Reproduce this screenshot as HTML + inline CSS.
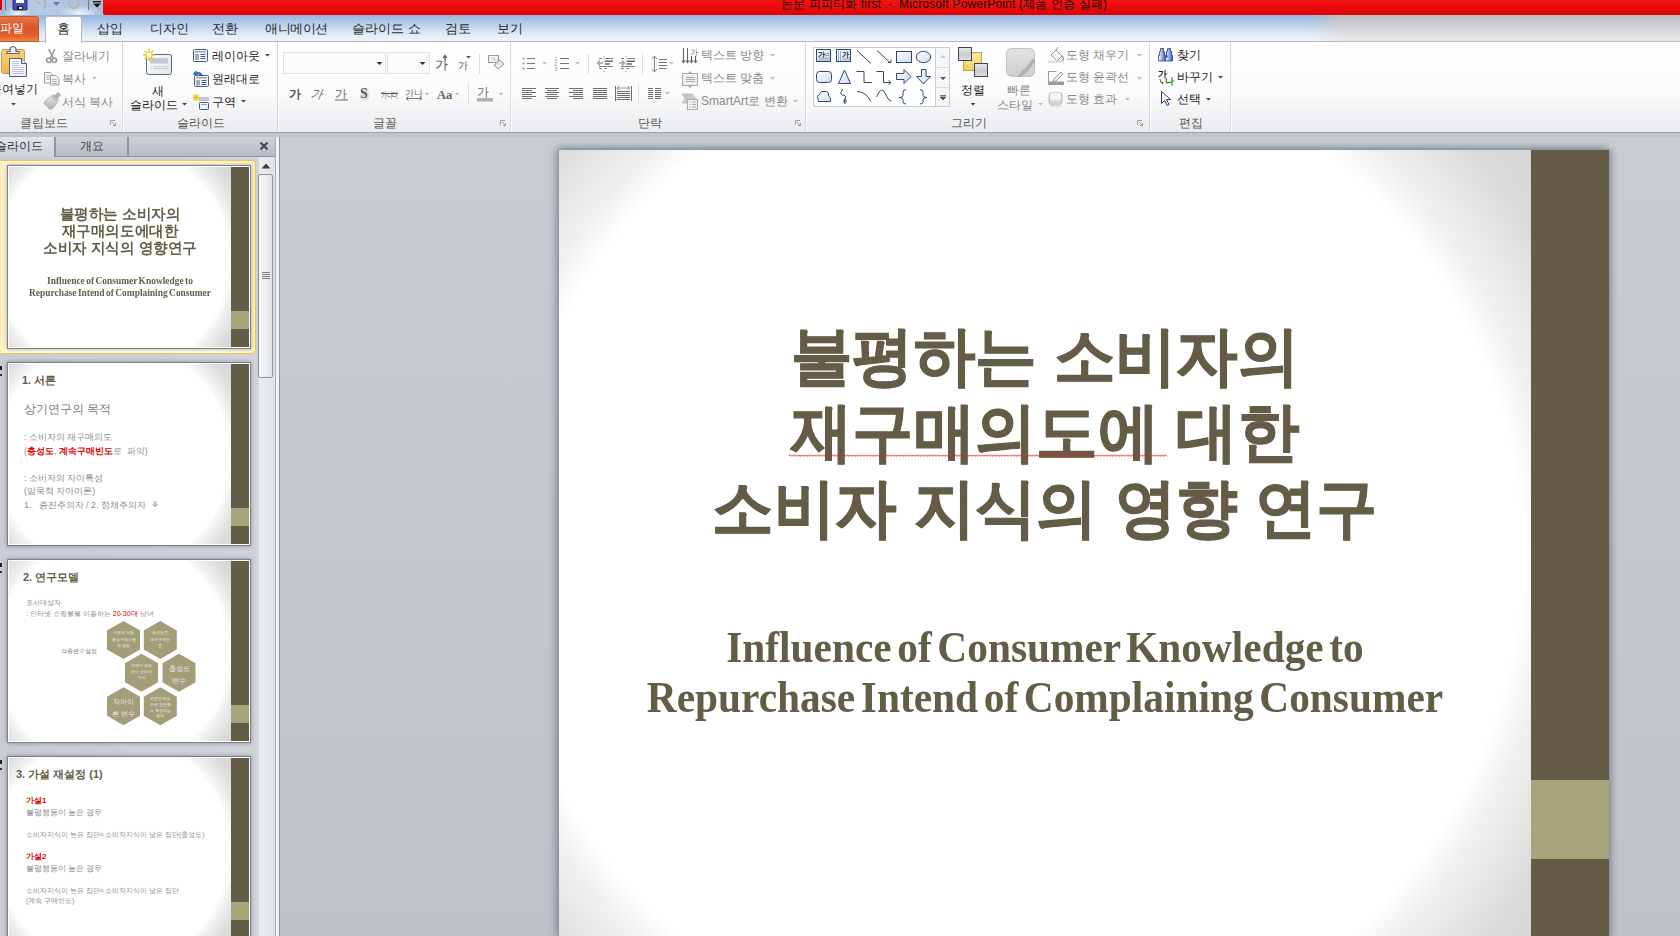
<!DOCTYPE html>
<html><head><meta charset="utf-8">
<style>
*{margin:0;padding:0;box-sizing:border-box}
html,body{width:1680px;height:936px;overflow:hidden;background:#c9ccd1;font-family:"Liberation Sans",sans-serif;}
.a{position:absolute}
.t{position:absolute;white-space:nowrap;font-size:12px;line-height:14px;color:#333}
.g{color:#8a8a8a}
#titlebar{left:0;top:0;width:1680px;height:16px;background:radial-gradient(ellipse 14px 8px at 18px 14px,rgba(255,255,240,.85),rgba(255,255,255,0)),radial-gradient(ellipse 22px 8px at 80px 13px,rgba(255,255,255,.8),rgba(255,255,255,0)),linear-gradient(90deg,#9fb8d6 0,#b8cde3 40px,#a6bdd8 100px,#b6c8dc 1300px,#c6c8ce 1340px,#d0d0d4 1680px)}
#redbar{left:103px;top:0;width:1577px;height:15px;background:linear-gradient(#f21414,#dc0404);border-bottom-left-radius:2px}
#tabrow{left:0;top:15px;width:1680px;height:27px;background:linear-gradient(#95b4de,#c5d7ee 45%,#e4edf7 75%,#eef3f9)}
#tabgrey{left:1310px;top:15px;width:370px;height:27px;background:linear-gradient(#bdbcc0,#d2d1d4 45%,#ececee);-webkit-mask-image:linear-gradient(90deg,transparent 0,#000 30px)}
#ribbon{left:0;top:41px;width:1680px;height:92px;background:linear-gradient(#ffffff 0,#fbfbfc 55%,#e9ebee 100%);border-top:1px solid #b6bac0;border-bottom:1px solid #9da3aa}
.sep{position:absolute;top:42px;width:2px;height:90px;border-left:1px solid #d4d8dd;border-right:1px solid #fff}
.glabel{position:absolute;top:116px;font-size:12px;line-height:14px;color:#555;white-space:nowrap}
#gap{left:0;top:133px;width:1680px;height:4px;background:#c1c5cb}
#panel{left:0;top:137px;width:275px;height:799px;background:linear-gradient(90deg,#c9cdd3,#d0d4da)}
#ptabs{left:0;top:137px;width:275px;height:20px;background:linear-gradient(#cfd3d9,#b9bdc3);border-top:1px solid #8e959d;border-bottom:1px solid #8e959d}
#splitter{left:275px;top:137px;width:5px;height:799px;background:#f2f3f5;border-left:1px solid #a9aeb5;border-right:1px solid #8f959c}
#main{left:280px;top:137px;width:1400px;height:799px;background:linear-gradient(#c9ccd1,#bfc2c7)}
.thumb{position:absolute;left:7px;width:244px;height:184px;border:1px solid #7b828a;background:#fff;box-shadow:0 0 4px rgba(0,0,0,.35)}
.thumb .sl{position:absolute;left:1px;top:1px;width:240px;height:180px;background:radial-gradient(circle farthest-corner at 43.3% 51.2%,#fff 0,#fff 70.5%,#f0f0f0 75%,#dadada 85%,#d0d0d0 100%);overflow:hidden}
.thumb .bar{position:absolute;left:222px;top:0;width:18px;height:180px;background:#655c47}
.thumb .band{position:absolute;left:222px;top:144px;width:18px;height:18px;background:#a8a57c}
#slide{left:559px;top:150px;width:1050px;height:788px;outline:1px solid rgba(140,152,166,.7);background:radial-gradient(circle farthest-corner at 43.3% 51.2%,#ffffff 0,#ffffff 70.5%,#f0f0f0 75%,#dadada 85%,#d0d0d0 100%);box-shadow:-3px -2px 8px rgba(60,70,80,.45), 3px 0 6px rgba(60,70,80,.35)}
#sbar{left:1531px;top:150px;width:78px;height:788px;background:#655c47}
#sband{left:1531px;top:780px;width:78px;height:79px;background:#a8a57c}
.title{position:absolute;left:559px;width:972px;text-align:center;color:#655c47;font-weight:bold;font-size:64px;white-space:nowrap;transform:scaleX(.96);-webkit-text-stroke:1px #655c47}
.sub{position:absolute;left:559px;width:972px;text-align:center;color:#655c47;font-weight:bold;font-family:"Liberation Serif",serif;font-size:44px;white-space:nowrap;transform:scaleX(.94)}
</style></head><body>
<div id="titlebar" class="a"></div>
<div id="redbar" class="a"></div>
<div id="tabrow" class="a"></div>
<div id="tabgrey" class="a"></div>
<div id="ribbon" class="a"></div>
<div id="gap" class="a"></div>
<div id="panel" class="a"></div>
<div id="ptabs" class="a"></div>
<div id="splitter" class="a"></div>
<div id="main" class="a"></div>


<!-- QAT -->
<div class="a" style="left:0;top:0;width:2px;height:10px;background:#d00"></div>
<div class="a" style="left:5px;top:0;width:1px;height:10px;background:#6a7a8a"></div>
<svg class="a" style="left:12px;top:0" width="16" height="11" viewBox="0 0 16 11"><rect x="1" y="-4" width="14" height="14" rx="1" fill="#4a48b8" stroke="#2a2a80" stroke-width="1"/><rect x="4" y="-4" width="8" height="7" fill="#fff"/><rect x="5" y="6" width="6" height="4" fill="#222"/><rect x="7" y="7" width="3" height="2" fill="#ddd"/></svg>
<svg class="a" style="left:35px;top:0" width="14" height="10" viewBox="0 0 14 10"><path d="M9 0 Q12 4 9 9" stroke="#b0b4ba" stroke-width="2.2" fill="none"/><path d="M1 0 L7 3 L3 4 Z" fill="#b0b4ba"/></svg>
<svg class="a" style="left:53px;top:2px" width="7" height="4"><path d="M0 0H7L3.5 4Z" fill="#6b7f99"/></svg>
<svg class="a" style="left:67px;top:0" width="14" height="10" viewBox="0 0 14 10"><path d="M4 -1 A5 5 0 1 0 10 -1" stroke="#b4b6ba" stroke-width="2.4" fill="none"/></svg>
<div class="a" style="left:88px;top:0;width:1px;height:10px;background:#6a7a8a"></div>
<svg class="a" style="left:93px;top:0" width="9" height="8"><rect x="0" y="1" width="8" height="1.3" fill="#111"/><path d="M0 3.5H8L4 7.5Z" fill="#111"/></svg>
<div class="t" style="left:781px;top:-3px;font-size:12px;color:#1a0a0a;white-space:pre;letter-spacing:0.15px">논문 피피티화 first  -  Microsoft PowerPoint (제품 인증 실패)</div>

<!-- tabs -->
<div class="a" style="left:-4px;top:16px;width:43px;height:26px;border-radius:3px 3px 0 0;background:linear-gradient(#e8734a,#d9552a 45%,#e0602d 80%,#f08a3c);border:1px solid #c4532a"></div>
<div class="t" style="left:0;top:21px;color:#fff;font-size:12px">파일</div>
<div class="a" style="left:45px;top:16px;width:37px;height:27px;border-radius:3px 3px 0 0;background:linear-gradient(#fafcff,#fff);border:1px solid #b6bac0;border-bottom:none"></div>
<div class="t" style="left:57px;top:22px;color:#2a2a2a;font-size:13px">홈</div>
<div class="t" style="left:97px;top:22px;color:#2a2a2a;font-size:13px">삽입</div>
<div class="t" style="left:150px;top:22px;color:#2a2a2a;font-size:13px">디자인</div>
<div class="t" style="left:212px;top:22px;color:#2a2a2a;font-size:13px">전환</div>
<div class="t" style="left:265px;top:22px;color:#2a2a2a;font-size:13px;letter-spacing:-0.5px">애니메이션</div>
<div class="t" style="left:352px;top:22px;color:#2a2a2a;font-size:13px">슬라이드 쇼</div>
<div class="t" style="left:445px;top:22px;color:#2a2a2a;font-size:13px">검토</div>
<div class="t" style="left:497px;top:22px;color:#2a2a2a;font-size:13px">보기</div>


<svg class="a" style="left:0;top:0" width="1680" height="135" viewBox="0 0 1680 135" font-family="Liberation Sans, sans-serif">
<defs>
<linearGradient id="gclip" x1="0" y1="0" x2="0" y2="1"><stop offset="0" stop-color="#f7d07a"/><stop offset="1" stop-color="#eeb84e"/></linearGradient>
<linearGradient id="gpaper" x1="0" y1="0" x2="1" y2="1"><stop offset="0" stop-color="#ffffff"/><stop offset="1" stop-color="#e6ecf5"/></linearGradient>
<linearGradient id="gslide" x1="0" y1="0" x2="1" y2="1"><stop offset="0" stop-color="#fdfdfe"/><stop offset="1" stop-color="#dfe5ee"/></linearGradient>
<radialGradient id="gstar"><stop offset="0" stop-color="#fffbe0"/><stop offset="0.5" stop-color="#f7d54a"/><stop offset="1" stop-color="#e8b820" stop-opacity="0.9"/></radialGradient>
<linearGradient id="ggrey" x1="0" y1="0" x2="0" y2="1"><stop offset="0" stop-color="#e8e8ea"/><stop offset="1" stop-color="#a9abae"/></linearGradient>
</defs>
<!-- paste -->
<rect x="1.5" y="49.5" width="23" height="24" rx="2" fill="url(#gclip)" stroke="#c49a52"/>
<path d="M7 53.5 h12 v-2 h-3 v-2 a3 3 0 0 0 -6 0 v2 h-3z" fill="#eef2f6" stroke="#5d6b7a" stroke-width="1.2"/>
<path d="M9.5 58.5 h12 l5 5 v13 h-17z" fill="url(#gpaper)" stroke="#4f627a"/>
<path d="M21.5 58.5 v5 h5" fill="#dfe6ef" stroke="#4f627a"/>
<g stroke="#b7c0cc" stroke-width="0.9"><path d="M12 61.5h7M12 63.5h7M12 65.5h7M12 67.5h12M12 69.5h12M12 71.5h12M12 73.5h12"/></g>
<path d="M11 103 h5 l-2.5 2.5z" fill="#444"/>
<!-- cut -->
<g stroke="#9a9a9a" fill="none" stroke-width="1.6"><path d="M48.5 49 L53.5 58.5 M55 49 L50 58.5"/><circle cx="48.8" cy="60.3" r="2.2"/><circle cx="54.3" cy="60.3" r="2.2"/></g>
<!-- copy -->
<path d="M44.5 72.5h6l3 3v7.5h-9z" fill="#f6f6f6" stroke="#a0a0a0"/>
<path d="M50.5 75.5h5.5l3 3v6.5h-8.5z" fill="#f6f6f6" stroke="#a0a0a0"/>
<path d="M46 75.5h4M46 77.5h5M46 79.5h4M52 79.5h5M52 81.5h5M52 83.5h5" stroke="#b8b8b8" stroke-width="1"/>
<path d="M92 77 h5 l-2.5 2.5z" fill="#b8bcc2"/>
<!-- format painter -->
<path d="M44 103.5q1-3 4-5l3-2l6 6l-2 3q-2 3-5 4z" fill="url(#ggrey)" stroke="#a6a6a6" stroke-width="0.8"/>
<path d="M51.5 96l5.5 5.5l1.5-1.5l-5.5-5.5z" fill="#c8c8c8" stroke="#9a9a9a" stroke-width="0.7"/>
<path d="M54.5 96l3.5-3.5l2.5 2.5l-3.5 3.5z" fill="#b5b5b5" stroke="#959595" stroke-width="0.7"/>
<!-- new slide -->
<rect x="146.5" y="54.5" width="25" height="20" rx="2" fill="url(#gslide)" stroke="#5a6a80"/>
<rect x="150" y="58" width="18" height="5.5" fill="#c3cad6"/>
<path d="M150 66.5h2M153 66.5h15M150 68.5h2M153 68.5h15" stroke="#c3cad6" stroke-width="0.9"/>
<g stroke="#f2c319" stroke-width="1.6"><path d="M149 49v12M143 55h12M144.8 50.8l8.4 8.4M153.2 50.8l-8.4 8.4"/></g>
<circle cx="149" cy="55" r="2.4" fill="#fffde8"/>
<path d="M182 103 h5 l-2.5 2.5z" fill="#444"/>
<!-- layout -->
<rect x="193.5" y="49.5" width="14" height="12" rx="1" fill="#f4f7fb" stroke="#4d5f78"/>
<rect x="195" y="51" width="11" height="1.5" fill="#9aa6b6"/>
<rect x="195" y="54" width="4" height="6" fill="#a5adb8"/>
<path d="M200.5 54.5h5M200.5 56.5h5M200.5 58.5h5" stroke="#3d5a9a" stroke-width="1"/>
<path d="M265 54 h5 l-2.5 2.5z" fill="#444"/>
<!-- reset -->
<rect x="194.5" y="75.5" width="14" height="11" rx="1" fill="#f4f7fb" stroke="#4d5f78"/>
<rect x="196" y="77" width="11" height="1.5" fill="#9aa6b6"/>
<rect x="196" y="80" width="4" height="5.5" fill="#a5adb8"/>
<path d="M201.5 80.5h5M201.5 82.5h5M201.5 84.5h5" stroke="#3d5a9a" stroke-width="1"/>
<path d="M193 74 L196 71 L196.5 72.5 Q201 71.5 203 76 L200.5 75 Q198 73.5 196.5 74.5 L197 76 Z" fill="#3a6fd8" stroke="#2452b0" stroke-width="0.6"/>
<!-- section -->
<g stroke="#f2c319" stroke-width="1.2"><path d="M196 94v7M192.5 97.5h7M193.5 95l5 5M198.5 95l-5 5"/></g>
<rect x="199.5" y="97.5" width="9" height="3" fill="#c8ccd2" stroke="#aab0b8" stroke-width="0.6"/>
<rect x="199.5" y="102.5" width="9" height="7" rx="0.8" fill="url(#gslide)" stroke="#4d5f78"/>
<rect x="201" y="104" width="6" height="1" fill="#9aa6b6"/>
<path d="M241 100 h5 l-2.5 2.5z" fill="#444"/>
<!-- launchers -->
<g fill="none" stroke="#8c9096" stroke-width="0.8"><path d="M110.5 125 v-4.5 h4.5"/><path d="M112 122 l3.5 3.5 M115.5 123 v2.5 h-2.5"/></g>
<g fill="none" stroke="#8c9096" stroke-width="0.8"><path d="M500.5 125 v-4.5 h4.5"/><path d="M502 122 l3.5 3.5 M505.5 123 v2.5 h-2.5"/></g>
<g fill="none" stroke="#8c9096" stroke-width="0.8"><path d="M795.5 125 v-4.5 h4.5"/><path d="M797 122 l3.5 3.5 M800.5 123 v2.5 h-2.5"/></g>
<g fill="none" stroke="#8c9096" stroke-width="0.8"><path d="M1137.5 125 v-4.5 h4.5"/><path d="M1139 122 l3.5 3.5 M1142.5 123 v2.5 h-2.5"/></g>
<!-- font boxes -->
<rect x="283.5" y="52.5" width="102" height="21" fill="#fafbfc" stroke="#dde2e8"/>
<rect x="387.5" y="52.5" width="42" height="21" fill="#fafbfc" stroke="#dde2e8"/>
<path d="M376.5 62 h6 l-3 3z" fill="#333"/>
<path d="M419.5 62 h6 l-3 3z" fill="#333"/>
<text x="435" y="69" font-size="13" fill="#555">가</text>
<path d="M445 60 v-4 M443 58 l2 -2.5 l2 2.5" stroke="#555" fill="none" stroke-width="1.2"/>
<text x="458" y="69" font-size="10" fill="#555">가</text>
<path d="M466 56 h5 l-2.5 2.5z" fill="#555"/>
<path d="M479.5 54v20" stroke="#dcdfe3"/>
<rect x="488.5" y="55.5" width="10" height="7" fill="#f0f0f0" stroke="#9a9a9a"/>
<text x="490" y="61.5" font-size="6" fill="#777">ㄱㄴ</text>
<path d="M494 65 l6 -5 l4 4 l-6 5z" fill="#e8e8e8" stroke="#9a9a9a"/>
<!-- font row2 -->
<text x="289" y="98" font-size="12" font-weight="bold" fill="#555">가</text>
<text x="310" y="98" font-size="12" font-style="italic" fill="#666" transform="skewX(-10) translate(17 0)">가</text>
<text x="335" y="98" font-size="12" fill="#666">가</text>
<path d="M335 100h13" stroke="#666"/>
<text x="360" y="98" font-size="14" font-weight="bold" fill="#606060" font-family="Liberation Serif, serif" style="filter:drop-shadow(1px 1.5px 1px #999)">S</text>
<text x="381" y="97.5" font-size="9" fill="#555" textLength="17" lengthAdjust="spacingAndGlyphs">가나다</text>
<path d="M381 93.5h17" stroke="#555"/>
<text x="405" y="96" font-size="9" fill="#666">가나</text>
<path d="M406 98.5h16 M406 98.5l2.5-2 M406 98.5l2.5 2 M422 98.5l-2.5-2 M422 98.5l-2.5 2" stroke="#777" fill="none"/>
<path d="M425 93 h4 l-2 2z" fill="#aaa"/>
<text x="437" y="98.5" font-size="12.5" font-weight="bold" fill="#666" font-family="Liberation Serif, serif">Aa</text>
<path d="M455 93 h4 l-2 2z" fill="#aaa"/>
<path d="M468.5 84v20" stroke="#dcdfe3"/>
<text x="477" y="96" font-size="12" fill="#666">가</text>
<rect x="477" y="98" width="16" height="3.5" fill="#b0b0b0"/>
<path d="M499 93 h4 l-2 2z" fill="#aaa"/>
</svg>


<svg class="a" style="left:0;top:0" width="1680" height="135" viewBox="0 0 1680 135" font-family="Liberation Sans, sans-serif">
<defs>
<linearGradient id="gshape" x1="0" y1="0" x2="1" y2="1"><stop offset="0" stop-color="#ffffff"/><stop offset="1" stop-color="#cfdcea"/></linearGradient>
<linearGradient id="gqs" x1="0" y1="0" x2="0" y2="1"><stop offset="0" stop-color="#e4e2e4"/><stop offset="1" stop-color="#cfcdd0"/></linearGradient>
<linearGradient id="garr" x1="0" y1="0" x2="0" y2="1"><stop offset="0" stop-color="#e9eaec"/><stop offset="0.5" stop-color="#c9cbcf"/><stop offset="1" stop-color="#e0e1e3"/></linearGradient>
<linearGradient id="gyel" x1="0" y1="0" x2="0" y2="1"><stop offset="0" stop-color="#fbe9a0"/><stop offset="1" stop-color="#ecd060"/></linearGradient>
</defs>
<g stroke="#777" stroke-width="1">
<!-- bullets -->
<path d="M527 58.5h8M527 63.5h8M527 68.5h8"/>
<path d="M560 58.5h9M560 63.5h9M560 68.5h9"/>
</g>
<g fill="#999"><circle cx="523.5" cy="58.5" r="1.1"/><circle cx="523.5" cy="63.5" r="1.1"/><circle cx="523.5" cy="68.5" r="1.1"/></g>
<text x="554.5" y="60.5" font-size="5" fill="#888">1</text><text x="554.5" y="65.5" font-size="5" fill="#888">2</text><text x="554.5" y="70.5" font-size="5" fill="#888">3</text>
<path d="M542 62 h5 l-2.5 2.5z M575 62 h5 l-2.5 2.5z M669 62 h5 l-2.5 2.5z M665 92 h5 l-2.5 2.5z M770 54 h5 l-2.5 2.5z M770 77 h5 l-2.5 2.5z M793 100 h5 l-2.5 2.5z" fill="#bbb"/>
<path d="M588.5 54v20M642.5 54v20M638.5 84v20" stroke="#dcdfe3"/>
<!-- indents -->
<g stroke="#808080" stroke-width="1">
<path d="M599 58.5h3M605 58.5h8M599 66.5h14M599 68.5h3M605 68.5h2"/>
<path d="M621 58.5h3M627 58.5h8M621 66.5h14M621 68.5h3M627 68.5h2"/>
</g>
<g stroke="#6a6a6a" stroke-width="1.6">
<path d="M605 61.3h8M605 64h5M627 61.3h8M627 64h5"/>
</g>
<path d="M604 56v16M626 56v16" stroke="#777" stroke-width="0.8" stroke-dasharray="1 1.5"/>
<path d="M603 63h-5.5M600 60.5l-2.5 2.5l2.5 2.5" stroke="#a0a0a0" fill="none" stroke-width="1.3"/>
<path d="M619 63h5.5M622 60.5l2.5 2.5l-2.5 2.5" stroke="#a0a0a0" fill="none" stroke-width="1.3"/>
<!-- line spacing -->
<path d="M654.5 56v16 M652 59l2.5-3l2.5 3 M652 69l2.5 3l2.5-3" stroke="#888" fill="none"/>
<path d="M659 59.5h8M659 62.5h8M659 65.5h8M659 68.5h8" stroke="#777"/>
<!-- align row -->
<g stroke="#6e6e6e" stroke-width="1">
<path d="M522 88.5h14M522 90.5h10M522 92.5h14M522 94.5h10M522 96.5h14M522 98.5h10"/>
<path d="M545 88.5h14M547 90.5h10M545 92.5h14M547 94.5h10M545 96.5h14M547 98.5h10"/>
<path d="M569 88.5h14M573 90.5h10M569 92.5h14M573 94.5h10M569 96.5h14M573 98.5h10"/>
<path d="M593 88.5h14M593 90.5h14M593 92.5h14M593 94.5h14M593 96.5h14M593 98.5h14"/>
<path d="M617 91.5h13M617 93.5h13M617 95.5h13M617 97.5h13M617 99.5h13M615.5 86v15M631.5 86v15"/>
<path d="M648 88.5h5M655 88.5h6M648 90.5h5M655 90.5h6M648 92.5h5M655 92.5h6M648 94.5h5M655 94.5h6M648 96.5h5M655 96.5h6M648 98.5h5M655 98.5h6"/>
</g>
<path d="M617 88h13 M619.5 86l-2.5 2l2.5 2 M627.5 86l2.5 2l-2.5 2" stroke="#999" fill="none"/>
<!-- text direction -->
<g stroke="#666" stroke-width="1.1" fill="none"><path d="M683.5 48v14M687.5 48v14M691.5 56v6M695.5 56v6M682 60.5l1.5 2l1.5-2M686 60.5l1.5 2l1.5-2M690 60.5l1.5 2l1.5-2M694 60.5l1.5 2l1.5-2"/></g>
<text x="689.5" y="55" font-size="7.5" fill="#666">가</text>
<!-- align text -->
<rect x="682.5" y="73.5" width="15" height="12" fill="#eeeef0" stroke="#aaa"/>
<path d="M686 77.5h9M686 79.5h9M686 81.5h9" stroke="#999" stroke-width="0.8"/>
<path d="M690 71l-2 2.5h4z M690 88l-2-2.5h4z" fill="#999"/>
<!-- smartart -->
<path d="M682 94h10l4 4.5l-4 4.5h-10l3-4.5z" fill="#c8c8c8" stroke="#b0b0b0" stroke-width="0.6"/>
<rect x="687.5" y="99.5" width="10" height="10" fill="#f2f2f2" stroke="#aaa"/>
<path d="M689.5 102h1M692 102h4M689.5 104.5h1M692 104.5h4M689.5 107h1M692 107h4" stroke="#999" stroke-width="0.8"/>
<!-- gallery -->
<rect x="813.5" y="47.5" width="136" height="59" fill="#fff" stroke="#c5cbd3"/>
<rect x="935.5" y="47.5" width="14" height="59" fill="#f5f6f8" stroke="#c5cbd3"/>
<path d="M935.5 67.5h14M935.5 87.5h14" stroke="#d5dae0"/>
<path d="M940 58h6l-3-3z" fill="#c8ccd0"/>
<path d="M940 77h6l-3 3z" fill="#555"/>
<path d="M940 95.5h6M940 97h6l-3 3z" stroke="#555" fill="#555" stroke-width="0.8"/>
<g stroke="#2e4a74" stroke-width="1" fill="url(#gshape)">
<rect x="896.5" y="51.5" width="15" height="11"/>
<ellipse cx="923.5" cy="57" rx="7.2" ry="5.7"/>
<rect x="816.5" y="71.5" width="15" height="11" rx="3"/>
<path d="M838.5 83.5l6-13.5l6 13.5z"/>
<path d="M896.5 73.5h7.5v-4l7 7l-7 7v-4h-7.5z"/>
<path d="M921.5 69.5h4.5v7h4.5l-7 7.5l-7-7.5h5z"/>
<path d="M818.5 101.5l-1-5l4-5h5q3 1 2 4.5q3 1 2 5.5z"/>
</g>
<g stroke="#2e4a74" stroke-width="1" fill="none">
<path d="M857 50.5l14 13M877 50.5l13 12M888 62.5h3v-3"/>
<path d="M856.5 71.5h7.5v11h8M876.5 71.5h7v11h7M888.5 80.5l2.5 2l-2.5 2"/>
<path d="M842 89v2q-2 1-1 3t3 1q3 1 1 4q-2 2 0 3q2 1 1 -2q-1 -2 -2 1l1 3"/>
<path d="M857 91.5q9 0 14 10"/>
<path d="M876.5 97q3-7 5-7q3 0 5 6q2 5 5 5"/>
<path d="M906 89.5q-3 0-3 3v3q0 2-4 2q4 0 4 2v2.5q0 2 3 2M920 89.5q3 0 3 3v3q0 2 4 2q-4 0-4 2v2.5q0 2-3 2"/>
</g>
<rect x="816.5" y="49.5" width="14" height="12" fill="url(#gshape)" stroke="#2e4a74"/>
<text x="818" y="56.5" font-size="7" font-weight="bold" fill="#111">가</text><path d="M824.5 53.5h5M824.5 55.5h5M818 58h11.5M818 60h11.5" stroke="#6a7fa6" stroke-width="0.7"/>
<rect x="836.5" y="49.5" width="14" height="12" fill="url(#gshape)" stroke="#2e4a74"/>
<text x="842" y="56.5" font-size="7" font-weight="bold" fill="#111">가</text><path d="M838.5 51v10M840.5 51v10M843 57.5v3M845 57.5v3M847 57.5v3M849 57.5v3" stroke="#6a7fa6" stroke-width="0.6"/>
<!-- arrange -->
<rect x="963.5" y="52.5" width="18" height="18" fill="url(#gyel)" stroke="#c9a830"/>
<rect x="958.5" y="47.5" width="13" height="13" fill="url(#garr)" stroke="#3b4654"/>
<rect x="974.5" y="63.5" width="13" height="13" fill="url(#garr)" stroke="#3b4654"/>
<path d="M970.5 103h5l-2.5 2.5z" fill="#444"/>
<!-- quick styles -->
<rect x="1006.5" y="48.5" width="28" height="28" rx="5" fill="url(#gqs)" stroke="#c2c0c3"/>
<path d="M1018 77 q4-7 9-10 l6-8 l2 2 l-6 8 q-3 5-11 8z" fill="#b5b3b5" stroke="#9e9c9f" stroke-width="0.6"/>
<path d="M1038 103h5l-2.5 2.5z" fill="#bbb"/>
<!-- shape fill -->
<path d="M1051 55l5-5l6 6l-5 5z" fill="#f5f5f5" stroke="#9a9a9a"/>
<path d="M1056 50l2-3" stroke="#9a9a9a"/>
<path d="M1062 56q2 2 1 5" stroke="#a0a0a0" stroke-width="1.5" fill="none"/>
<rect x="1048" y="60.5" width="16" height="2.5" fill="#e8dde2"/>
<path d="M1137 54h5l-2.5 2.5z M1137 77h5l-2.5 2.5z M1125 98h5l-2.5 2.5z" fill="#bbb"/>
<!-- outline -->
<path d="M1048.5 82v-10.5h8" stroke="#9a9a9a" fill="none"/>
<path d="M1054 79l7-7l2 2l-7 7l-3 1z" fill="#f4f4f4" stroke="#999"/>
<rect x="1048" y="81.5" width="16" height="3.5" fill="#9b9b9b"/>
<!-- effects -->
<rect x="1049" y="92.5" width="13" height="12" rx="3" fill="#d4d3d6" stroke="#b0afb2" stroke-width="0.8"/>
<rect x="1050" y="92.5" width="11" height="8" rx="2.5" fill="#f4f3f5"/>
<ellipse cx="1056" cy="106" rx="7" ry="1.5" fill="#e2e2e2"/>
<!-- find -->
<defs><linearGradient id="gbin" x1="0" y1="0" x2="1" y2="0"><stop offset="0" stop-color="#ffffff"/><stop offset="1" stop-color="#3a5cb0"/></linearGradient></defs>
<g stroke="#243f8a" stroke-width="0.8" fill="url(#gbin)">
<path d="M1160.5 48.5h3v3h1v4h1v5.5h-7v-5.5h1v-4h1z"/>
<path d="M1167.5 48.5h3v3h1v4h1v5.5h-7v-5.5h1v-4h1z"/>
</g>
<path d="M1165.5 55.5h2v2h-2z" fill="#243f8a"/>
<!-- replace -->
<text x="1158" y="77" font-size="8.5" font-weight="bold" fill="#222">가</text>
<text x="1165" y="84" font-size="9" fill="#1a8a1a" font-weight="bold">나</text>
<path d="M1160 79q0 4 3 4 M1161.5 82.5l1.5 0.5l-1 1" stroke="#222" fill="none" stroke-width="0.8"/>
<path d="M1218 76h5l-2.5 2.5z M1206 98h5l-2.5 2.5z" fill="#444"/>
<!-- select -->
<path d="M1161.5 91.5v12l3-3l2.5 5l2-1l-2.5-5h4z" fill="#fff" stroke="#2b3e6a"/>
</svg>

<!-- ribbon separators -->
<div class="sep" style="left:122px"></div>
<div class="sep" style="left:277px"></div>
<div class="sep" style="left:510px"></div>
<div class="sep" style="left:805px"></div>
<div class="sep" style="left:1149px"></div>
<div class="sep" style="left:1230px"></div>

<!-- group labels -->
<div class="glabel" style="left:20px">클립보드</div>
<div class="glabel" style="left:177px">슬라이드</div>
<div class="glabel" style="left:373px">글꼴</div>
<div class="glabel" style="left:638px">단락</div>
<div class="glabel" style="left:951px">그리기</div>
<div class="glabel" style="left:1179px">편집</div>

<!-- clipboard -->
<div class="t" style="left:-10px;top:82px;color:#222">붙여넣기</div>
<div class="t g" style="left:62px;top:49px">잘라내기</div>
<div class="t g" style="left:62px;top:72px">복사</div>
<div class="t g" style="left:62px;top:95px">서식 복사</div>

<!-- slides -->
<div class="t" style="left:152px;top:84px;color:#222">새</div>
<div class="t" style="left:130px;top:98px;color:#222">슬라이드</div>
<div class="t" style="left:212px;top:49px;color:#222">레이아웃</div>
<div class="t" style="left:212px;top:72px;color:#222">원래대로</div>
<div class="t" style="left:212px;top:95px;color:#222">구역</div>

<!-- paragraph -->
<div class="t g" style="left:701px;top:48px">텍스트 방향</div>
<div class="t g" style="left:701px;top:71px">텍스트 맞춤</div>
<div class="t g" style="left:701px;top:94px">SmartArt로 변환</div>

<!-- drawing -->
<div class="t" style="left:961px;top:83px;color:#222">정렬</div>
<div class="t g" style="left:1007px;top:83px">빠른</div>
<div class="t g" style="left:997px;top:98px">스타일</div>
<div class="t g" style="left:1066px;top:48px">도형 채우기</div>
<div class="t g" style="left:1066px;top:70px">도형 윤곽선</div>
<div class="t g" style="left:1066px;top:92px">도형 효과</div>

<!-- editing -->
<div class="t" style="left:1177px;top:48px;color:#222">찾기</div>
<div class="t" style="left:1177px;top:70px;color:#222">바꾸기</div>
<div class="t" style="left:1177px;top:92px;color:#222">선택</div>


<!-- panel -->
<div class="a" style="left:0;top:137px;width:55px;height:20px;background:linear-gradient(#e2e5e9,#cdd0d5);border-right:1px solid #8e959d"></div>
<div class="a" style="left:55px;top:137px;width:73px;height:20px;background:linear-gradient(#cdd0d5,#b9bcc2);border:1px solid #8e959d;border-top:none"></div>
<div class="a" style="left:128px;top:137px;width:147px;height:20px;background:linear-gradient(#cdd0d5,#b9bcc2);border-bottom:1px solid #8e959d;border-left:1px solid #8e959d"></div>
<div class="t" style="left:-5px;top:139px;color:#333">슬라이드</div>
<div class="t" style="left:80px;top:139px;color:#444">개요</div>
<svg class="a" style="left:259px;top:141px" width="10" height="10"><path d="M1.5 1.5l7 7M8.5 1.5l-7 7" stroke="#4a4d52" stroke-width="2.2"/></svg>
<!-- scrollbar -->
<div class="a" style="left:258px;top:157px;width:17px;height:779px;background:linear-gradient(90deg,#e9ecf0,#dfe3e8);border-left:1px solid #d3d7dc"></div>
<svg class="a" style="left:259px;top:160px" width="14" height="10"><path d="M2.5 8.5h9l-4.5-5z" fill="#3c3f44"/></svg>
<div class="a" style="left:258px;top:174px;width:15px;height:204px;border:1px solid #8d939b;border-radius:2px;background:linear-gradient(90deg,#f6f8fa,#dfe3e8)"></div>
<svg class="a" style="left:261px;top:270px" width="10" height="10"><path d="M1 2.5h8M1 4.5h8M1 6.5h8M1 8.5h8" stroke="#7e848c" stroke-width="1"/></svg>
<div class="a" style="left:0;top:366px;width:2px;height:4px;background:#222"></div><div class="a" style="left:0;top:374px;width:2px;height:2px;background:#333"></div><div class="a" style="left:0;top:563px;width:2px;height:4px;background:#222"></div><div class="a" style="left:0;top:571px;width:2px;height:2px;background:#333"></div><div class="a" style="left:0;top:760px;width:2px;height:4px;background:#222"></div><div class="a" style="left:0;top:768px;width:2px;height:2px;background:#333"></div>
<!-- selection -->
<div class="a" style="left:-4px;top:160px;width:260px;height:194px;border:1px solid #f1c84a;border-radius:0 4px 4px 0;background:linear-gradient(90deg,#fde7a0 0,#fef6d6 8px,#fffbe9 30px,#fffbe9 230px,#fbf2cc 255px);box-shadow:inset 0 1px 0 #fff6d0"></div>

<div class="thumb" style="top:165px"><div class="sl">
 <div class="bar"></div><div class="band"></div>
 <div class="a" style="left:0;top:38px;width:222px;text-align:center;color:#655c47;font-weight:bold;font-size:15px;line-height:17px;white-space:nowrap;transform:scaleX(.97)">불평하는 소비자의<br>재구매의도에대한<br>소비자 지식의 영향연구</div>
 <div class="a" style="left:0;top:108px;width:222px;text-align:center;color:#655c47;font-weight:bold;font-family:'Liberation Serif',serif;font-size:10.2px;line-height:12.3px;white-space:nowrap;transform:scaleX(.925);word-spacing:-1px">Influence of Consumer Knowledge to<br>Repurchase Intend of Complaining Consumer</div>
</div></div>
<div class="thumb" style="top:362px"><div class="sl">
 <div class="bar"></div><div class="band"></div>
 <div class="a" style="left:13px;top:10px;color:#655c47;font-weight:bold;font-size:11px;line-height:13px;white-space:nowrap">1. 서론</div>
 <div class="a" style="left:15px;top:39px;color:#7a7a7a;font-size:11.5px;line-height:13px;white-space:nowrap">상기연구의 목적</div>
 <div class="a" style="left:15px;top:67px;color:#8a8a8a;font-size:8.8px;line-height:13.6px;white-space:pre">: 소비자의 재구매의도
(<b style="color:#e00000">충성도</b>, <b style="color:#e00000">계속구매빈도</b>로  파악)

: 소비자의 자아특성
(암묵적 자아이론)
1.   증진주의자 / 2. 정체주의자  ⚘</div>
</div></div>
<div class="thumb" style="top:559px"><div class="sl">
 <div class="bar"></div><div class="band"></div>
 <div class="a" style="left:14px;top:10px;color:#655c47;font-weight:bold;font-size:11px;line-height:13px;white-space:nowrap">2. 연구모델</div>
 <div class="a" style="left:17px;top:36px;color:#8a8a8a;font-size:7px;line-height:11px;white-space:pre">조사대상자
: 인터넷 쇼핑몰을 이용하는 <span style="color:#e00000">20-30대</span> 남녀</div>
 <div class="a" style="left:52px;top:86px;color:#777;font-size:6px;line-height:8px;white-space:nowrap">각종변수설정</div>
 <svg class="a" style="left:0;top:0" width="222" height="180">
  <g fill="#a39d7a">
   <path d="M114.5 60.1l16.5 9.5v19l-16.5 9.5l-16.5-9.5v-19z"/>
   <path d="M151.3 60.1l16.5 9.5v19l-16.5 9.5l-16.5-9.5v-19z"/>
   <path d="M132.5 92.8l16.5 9.5v19l-16.5 9.5l-16.5-9.5v-19z"/>
   <path d="M170 92.8l16.5 9.5v19l-16.5 9.5l-16.5-9.5v-19z"/>
   <path d="M114.5 126.2l16.5 9.5v19l-16.5 9.5l-16.5-9.5v-19z"/>
   <path d="M151.3 126.2l16.5 9.5v19l-16.5 9.5l-16.5-9.5v-19z"/>
  </g>
  <g fill="#f2f0e6" font-size="3.5" text-anchor="middle" font-family="Liberation Sans, sans-serif" transform="translate(0 4.5)">
   <text x="114.5" y="68">지문의 적합</text><text x="114.5" y="75">충성구매사용</text><text x="114.5" y="81">의 결정</text>
   <text x="151.3" y="68">충성정도,</text><text x="151.3" y="75">계속구매빈</text><text x="151.3" y="81">도</text>
   <text x="132.5" y="101">지문이 계속</text><text x="132.5" y="107">비슷 소비자</text><text x="132.5" y="113">지식</text>
   <text x="151.3" y="134">지문조작상</text><text x="151.3" y="140">으로 표준화</text><text x="151.3" y="146">수 측정하는</text><text x="151.3" y="151">결과</text>
  </g>
  <g fill="#f2f0e6" font-size="7" text-anchor="middle" font-family="Liberation Sans, sans-serif" transform="translate(0 4.5)">
   <text x="170" y="105">충성도</text><text x="170" y="117">변수</text>
   <text x="114.5" y="138">자아이</text><text x="114.5" y="150">론 변수</text>
  </g>
 </svg>
</div></div>
<div class="thumb" style="top:756px"><div class="sl">
 <div class="bar"></div><div class="band"></div>
 <div class="a" style="left:7px;top:10px;color:#655c47;font-weight:bold;font-size:11px;line-height:13px;white-space:nowrap">3. 가설 재설정 (1)</div>
 <div class="a" style="left:17px;top:38px;color:#e00000;font-weight:bold;font-size:8px;line-height:10px;white-space:nowrap">가설1</div>
 <div class="a" style="left:17px;top:50px;color:#8a8a8a;font-size:8px;line-height:10px;white-space:nowrap">불평행동이 높은 경우</div>
 <div class="a" style="left:17px;top:73px;color:#8a8a8a;font-size:6.6px;line-height:8px;white-space:nowrap">소비자지식이 높은 집단&gt; 소비자지식이 낮은 집단(충성도)</div>
 <div class="a" style="left:17px;top:94px;color:#e00000;font-weight:bold;font-size:8px;line-height:10px;white-space:nowrap">가설2</div>
 <div class="a" style="left:17px;top:106px;color:#8a8a8a;font-size:8px;line-height:10px;white-space:nowrap">불평행동이 높은 경우</div>
 <div class="a" style="left:17px;top:128px;color:#8a8a8a;font-size:6.6px;line-height:10px;white-space:pre">소비자지식이 높은 집단&gt; 소비자지식이 낮은 집단
(계속 구매빈도)</div>
</div></div>

<!-- main slide -->
<div id="slide" class="a"></div>
<div id="sbar" class="a"></div>
<div id="sband" class="a"></div>
<div class="title" style="top:318px;line-height:76px">불평하는 소비자의<br>재구매의도에 대한<br>소비자 지식의 영향 연구</div>
<svg class="a" style="left:789px;top:454px" width="380" height="4"><path d="M0 2 L1.5 0.8 L3.0 2.4 L4.5 0.8 L6.0 2.4 L7.5 0.8 L9.0 2.4 L10.5 0.8 L12.0 2.4 L13.5 0.8 L15.0 2.4 L16.5 0.8 L18.0 2.4 L19.5 0.8 L21.0 2.4 L22.5 0.8 L24.0 2.4 L25.5 0.8 L27.0 2.4 L28.5 0.8 L30.0 2.4 L31.5 0.8 L33.0 2.4 L34.5 0.8 L36.0 2.4 L37.5 0.8 L39.0 2.4 L40.5 0.8 L42.0 2.4 L43.5 0.8 L45.0 2.4 L46.5 0.8 L48.0 2.4 L49.5 0.8 L51.0 2.4 L52.5 0.8 L54.0 2.4 L55.5 0.8 L57.0 2.4 L58.5 0.8 L60.0 2.4 L61.5 0.8 L63.0 2.4 L64.5 0.8 L66.0 2.4 L67.5 0.8 L69.0 2.4 L70.5 0.8 L72.0 2.4 L73.5 0.8 L75.0 2.4 L76.5 0.8 L78.0 2.4 L79.5 0.8 L81.0 2.4 L82.5 0.8 L84.0 2.4 L85.5 0.8 L87.0 2.4 L88.5 0.8 L90.0 2.4 L91.5 0.8 L93.0 2.4 L94.5 0.8 L96.0 2.4 L97.5 0.8 L99.0 2.4 L100.5 0.8 L102.0 2.4 L103.5 0.8 L105.0 2.4 L106.5 0.8 L108.0 2.4 L109.5 0.8 L111.0 2.4 L112.5 0.8 L114.0 2.4 L115.5 0.8 L117.0 2.4 L118.5 0.8 L120.0 2.4 L121.5 0.8 L123.0 2.4 L124.5 0.8 L126.0 2.4 L127.5 0.8 L129.0 2.4 L130.5 0.8 L132.0 2.4 L133.5 0.8 L135.0 2.4 L136.5 0.8 L138.0 2.4 L139.5 0.8 L141.0 2.4 L142.5 0.8 L144.0 2.4 L145.5 0.8 L147.0 2.4 L148.5 0.8 L150.0 2.4 L151.5 0.8 L153.0 2.4 L154.5 0.8 L156.0 2.4 L157.5 0.8 L159.0 2.4 L160.5 0.8 L162.0 2.4 L163.5 0.8 L165.0 2.4 L166.5 0.8 L168.0 2.4 L169.5 0.8 L171.0 2.4 L172.5 0.8 L174.0 2.4 L175.5 0.8 L177.0 2.4 L178.5 0.8 L180.0 2.4 L181.5 0.8 L183.0 2.4 L184.5 0.8 L186.0 2.4 L187.5 0.8 L189.0 2.4 L190.5 0.8 L192.0 2.4 L193.5 0.8 L195.0 2.4 L196.5 0.8 L198.0 2.4 L199.5 0.8 L201.0 2.4 L202.5 0.8 L204.0 2.4 L205.5 0.8 L207.0 2.4 L208.5 0.8 L210.0 2.4 L211.5 0.8 L213.0 2.4 L214.5 0.8 L216.0 2.4 L217.5 0.8 L219.0 2.4 L220.5 0.8 L222.0 2.4 L223.5 0.8 L225.0 2.4 L226.5 0.8 L228.0 2.4 L229.5 0.8 L231.0 2.4 L232.5 0.8 L234.0 2.4 L235.5 0.8 L237.0 2.4 L238.5 0.8 L240.0 2.4 L241.5 0.8 L243.0 2.4 L244.5 0.8 L246.0 2.4 L247.5 0.8 L249.0 2.4 L250.5 0.8 L252.0 2.4 L253.5 0.8 L255.0 2.4 L256.5 0.8 L258.0 2.4 L259.5 0.8 L261.0 2.4 L262.5 0.8 L264.0 2.4 L265.5 0.8 L267.0 2.4 L268.5 0.8 L270.0 2.4 L271.5 0.8 L273.0 2.4 L274.5 0.8 L276.0 2.4 L277.5 0.8 L279.0 2.4 L280.5 0.8 L282.0 2.4 L283.5 0.8 L285.0 2.4 L286.5 0.8 L288.0 2.4 L289.5 0.8 L291.0 2.4 L292.5 0.8 L294.0 2.4 L295.5 0.8 L297.0 2.4 L298.5 0.8 L300.0 2.4 L301.5 0.8 L303.0 2.4 L304.5 0.8 L306.0 2.4 L307.5 0.8 L309.0 2.4 L310.5 0.8 L312.0 2.4 L313.5 0.8 L315.0 2.4 L316.5 0.8 L318.0 2.4 L319.5 0.8 L321.0 2.4 L322.5 0.8 L324.0 2.4 L325.5 0.8 L327.0 2.4 L328.5 0.8 L330.0 2.4 L331.5 0.8 L333.0 2.4 L334.5 0.8 L336.0 2.4 L337.5 0.8 L339.0 2.4 L340.5 0.8 L342.0 2.4 L343.5 0.8 L345.0 2.4 L346.5 0.8 L348.0 2.4 L349.5 0.8 L351.0 2.4 L352.5 0.8 L354.0 2.4 L355.5 0.8 L357.0 2.4 L358.5 0.8 L360.0 2.4 L361.5 0.8 L363.0 2.4 L364.5 0.8 L366.0 2.4 L367.5 0.8 L369.0 2.4 L370.5 0.8 L372.0 2.4 L373.5 0.8 L375.0 2.4 L376.5 0.8 L378.0 2.4" stroke="#e82020" stroke-width="0.9" fill="none"/></svg>
<div class="sub" style="top:623px;line-height:50px;word-spacing:-5px">Influence of Consumer Knowledge to<br>Repurchase Intend of Complaining Consumer</div>

</body></html>
